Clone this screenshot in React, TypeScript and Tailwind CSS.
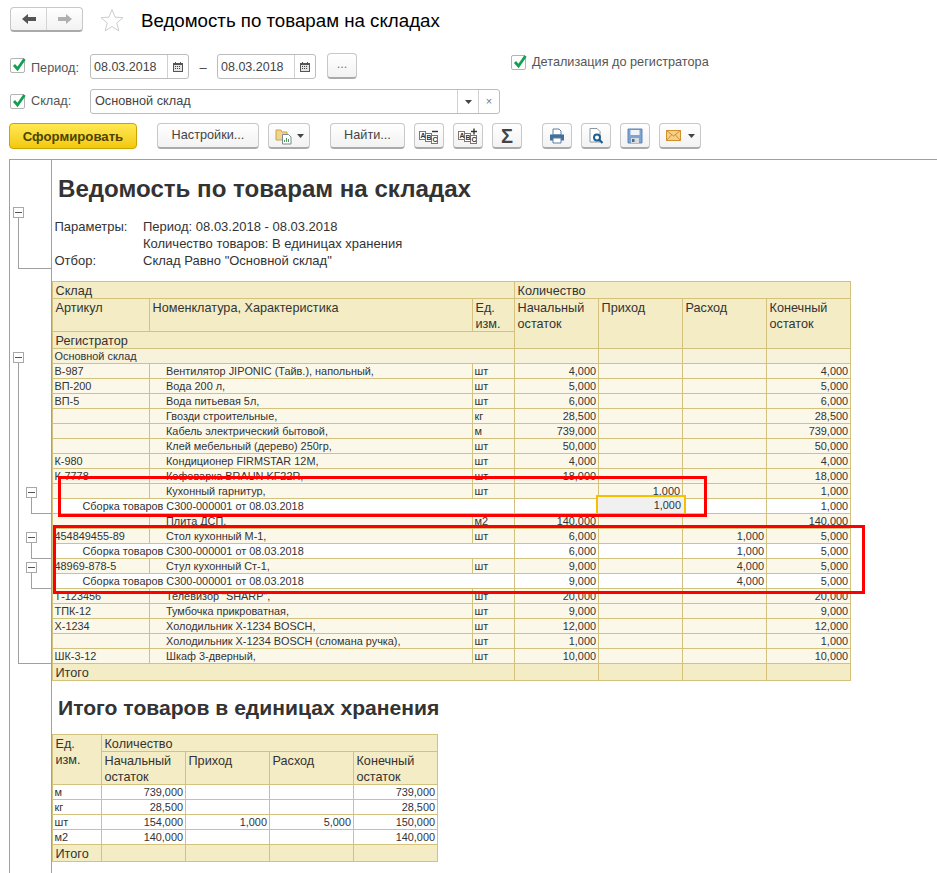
import { ReactNode } from "react";

type Row = {
  code?: string;
  name?: string;
  unit?: string;
  reg?: boolean;
  start?: string;
  inc?: string;
  out?: string;
  end?: string;
};

const REG = "Сборка товаров С300-000001 от 08.03.2018";

const rows: Row[] = [
  { code: "В-987", name: "Вентилятор JIPONIC (Тайв.), напольный,", unit: "шт", start: "4,000", end: "4,000" },
  { code: "ВП-200", name: "Вода 200 л,", unit: "шт", start: "5,000", end: "5,000" },
  { code: "ВП-5", name: "Вода питьевая 5л,", unit: "шт", start: "6,000", end: "6,000" },
  { name: "Гвозди строительные,", unit: "кг", start: "28,500", end: "28,500" },
  { name: "Кабель электрический бытовой,", unit: "м", start: "739,000", end: "739,000" },
  { name: "Клей мебельный (дерево) 250гр,", unit: "шт", start: "50,000", end: "50,000" },
  { code: "К-980", name: "Кондиционер FIRMSTAR 12М,", unit: "шт", start: "4,000", end: "4,000" },
  { code: "К-7778", name: "Кофеварка BRAUN KF22R,", unit: "шт", start: "18,000", end: "18,000" },
  { name: "Кухонный гарнитур,", unit: "шт", inc: "1,000", end: "1,000" },
  { reg: true, end: "1,000" },
  { name: "Плита ДСП,", unit: "м2", start: "140,000", end: "140,000" },
  { code: "454849455-89", name: "Стол кухонный М-1,", unit: "шт", start: "6,000", out: "1,000", end: "5,000" },
  { reg: true, start: "6,000", out: "1,000", end: "5,000" },
  { code: "48969-878-5", name: "Стул кухонный Ст-1,", unit: "шт", start: "9,000", out: "4,000", end: "5,000" },
  { reg: true, start: "9,000", out: "4,000", end: "5,000" },
  { code: "Т-123456", name: 'Телевизор "SHARP",', unit: "шт", start: "20,000", end: "20,000" },
  { code: "ТПК-12", name: "Тумбочка прикроватная,", unit: "шт", start: "9,000", end: "9,000" },
  { code: "Х-1234", name: "Холодильник Х-1234 BOSCH,", unit: "шт", start: "12,000", end: "12,000" },
  { name: "Холодильник Х-1234 BOSCH (сломана ручка),", unit: "шт", start: "1,000", end: "1,000" },
  { code: "ШК-3-12", name: "Шкаф 3-дверный,", unit: "шт", start: "10,000", end: "10,000" },
];

const totals = [
  { unit: "м", start: "739,000", end: "739,000" },
  { unit: "кг", start: "28,500", end: "28,500" },
  { unit: "шт", start: "154,000", inc: "1,000", out: "5,000", end: "150,000" },
  { unit: "м2", start: "140,000", end: "140,000" },
];

const td = "border border-[#d2c27e] px-[1.5px] align-middle text-[10.9px] leading-[13px] text-[#333] whitespace-nowrap overflow-hidden";
const num = "border border-[#d2c27e] px-[2px] align-middle text-right text-[10.9px] leading-[13px] text-[#333] whitespace-nowrap";

function Th({ children, colSpan, rowSpan }: { children?: ReactNode; colSpan?: number; rowSpan?: number }) {
  return (
    <th
      colSpan={colSpan}
      rowSpan={rowSpan}
      className="border border-[#d2c27e] bg-[#f3ecc4] px-[2.5px] align-top text-left text-[12.67px] leading-[16px] font-normal text-[#333]"
    >
      <span className="block translate-y-px">{children}</span>
    </th>
  );
}

function Check() {
  return (
    <span className="relative flex h-[15px] w-[15px] shrink-0 rounded-[2px] border border-[#b4b4b4] bg-white">
      <svg viewBox="0 0 16 16" className="absolute -top-[2px] left-0 h-[16px] w-[16px]">
        <path d="M3 8l3.5 4L13.5 2" fill="none" stroke="#12a150" strokeWidth="2.8" />
      </svg>
    </span>
  );
}

function Btn({ className, children }: { className: string; children: ReactNode }) {
  return (
    <button
      className={
        "flex h-[26px] items-center justify-center rounded-[4px] border border-b-2 border-[#c8c8c8] border-b-[#aaaaaa] bg-gradient-to-b from-white to-[#f2f2f2] text-[12.7px] text-[#444] " +
        className
      }
    >
      {children}
    </button>
  );
}

function Caret() {
  return (
    <svg viewBox="0 0 7 4" className="h-[4px] w-[7px]">
      <path d="M0 0h7L3.5 4z" fill="#444" />
    </svg>
  );
}

function CalendarIcon() {
  return (
    <svg viewBox="0 0 10 10" className="h-[10px] w-[10px]">
      <path d="M2 0h1v1h4V0h1v1h2v9H0V1h2z" fill="#555" />
      <path d="M1 3h8v6H1z" fill="#e4e4e4" />
      <path d="M2 4h1v1H2zM4 4h1v1H4zM6 4h1v1H6zM2 6h1v1H2zM4 6h1v1H4zM6 6h1v1H6z" fill="#444" />
    </svg>
  );
}

function DateInput() {
  return (
    <div className="flex h-[25px] w-[99px] items-center rounded-[3px] border border-[#bcbcbc] bg-white">
      <span className="flex-1 pl-[3px] pt-px text-[12.5px] text-[#444]">08.03.2018</span>
      <span className="flex h-full w-[21px] items-center justify-center border-l border-[#d0d0d0]">
        <CalendarIcon />
      </span>
    </div>
  );
}

function AbcIcon({ plus }: { plus?: boolean }) {
  return (
    <svg viewBox="0 0 20 18" className="h-[18px] w-[20px]">
      <rect x="0.5" y="4.5" width="6" height="8" fill="#fff" stroke="#777" />
      <rect x="6.5" y="6.5" width="6" height="8" fill="#fff" stroke="#777" />
      <rect x="12.5" y="8.5" width="6" height="8" fill="#fff" stroke="#777" />
      <text x="1.5" y="11" fontSize="7" fontWeight="700" fill="#333" fontFamily="Liberation Sans, sans-serif">A</text>
      <text x="7.5" y="13" fontSize="7" fontWeight="700" fill="#333" fontFamily="Liberation Sans, sans-serif">B</text>
      <text x="13.5" y="15" fontSize="7" fontWeight="700" fill="#333" fontFamily="Liberation Sans, sans-serif">C</text>
      <path d="M13 4.5h6" stroke="#333" strokeWidth="1.4" />
      {plus && <path d="M16 1.5v6" stroke="#333" strokeWidth="1.4" />}
    </svg>
  );
}

function Outline({ className, line, arm }: { className: string; line: string; arm: string }) {
  // скобка группировки слева от отчёта
  return (
    <div className={"absolute " + className}>
      <div className={"absolute left-[5px] w-px bg-[#a0a0a0] " + line} />
      <div className={"absolute left-[5px] h-px bg-[#a0a0a0] " + arm} />
      <div className="absolute left-0 top-0 flex h-[11px] w-[11px] items-center justify-center border border-[#a8a8a8] bg-white">
        <span className="h-px w-[7px] bg-[#555]" />
      </div>
    </div>
  );
}

export default function App() {
  return (
    <div className="flex h-[873px] flex-col overflow-hidden bg-white font-['Liberation_Sans',Arial,sans-serif]">
      <div className="flex h-[38px] items-start pl-[10px] pt-[7px]">
        <div className="flex h-[25px] w-[73px] rounded-[4px] border border-b-2 border-[#c8c8c8] border-b-[#aaaaaa] bg-gradient-to-b from-white to-[#f2f2f2]">
          <span className="flex flex-1 items-center justify-center border-r border-[#d4d4d4]">
            <svg viewBox="0 0 14 10" className="h-[10px] w-[14px]">
              <path d="M0 5l6-5v3h8v4H6v3z" fill="#555" />
            </svg>
          </span>
          <span className="flex flex-1 items-center justify-center">
            <svg viewBox="0 0 14 10" className="h-[10px] w-[14px]">
              <path d="M14 5L8 0v3H0v4h8v3z" fill="#b0b0b0" />
            </svg>
          </span>
        </div>
        <svg viewBox="0 0 24 24" className="ml-[17px] mt-[1px] h-[24px] w-[24px]">
          <path d="M12 1.5l3 7.6 8 .6-6.2 5.2 2 8L12 18.5l-6.8 4.4 2-8L1 9.7l8-.6z" fill="none" stroke="#c9ced2" strokeWidth="1" />
        </svg>
        <h1 className="ml-[17px] mt-[1px] text-[18.7px] leading-[26px] text-black">Ведомость по товарам на складах</h1>
      </div>

      <div className="mt-[15px] flex h-[26px] items-start pl-[10px]">
        <div className="mt-[5px]"><Check /></div>
        <span className="ml-[6px] mt-[6px] w-[59px] text-[12.7px] text-[#555]">Период:</span>
        <div className="mt-[1px]"><DateInput /></div>
        <span className="mt-[5px] w-[28px] text-center text-[13px] text-[#444]">–</span>
        <div className="mt-[1px]"><DateInput /></div>
        <Btn className="ml-[11px] w-[30px] pb-[2px] text-[#777]">...</Btn>
        <div className="ml-[154px] flex items-center">
          <Check />
          <span className="ml-[6px] text-[12.7px] text-[#555]">Детализация до регистратора</span>
        </div>
      </div>

      <div className="mt-[10px] flex h-[25px] items-center pl-[10px]">
        <Check />
        <span className="ml-[6px] w-[59px] pt-px text-[12.7px] text-[#555]">Склад:</span>
        <div className="flex h-[25px] w-[410px] items-center rounded-[3px] border border-[#bcbcbc] bg-white">
          <span className="flex-1 pl-[4px] pt-px text-[12.7px] text-[#444]">Основной склад</span>
          <span className="flex h-full w-[21px] items-center justify-center border-l border-[#d0d0d0]"><Caret /></span>
          <span className="flex h-full w-[21px] items-center justify-center border-l border-[#d0d0d0] text-[11px] text-[#777]">×</span>
        </div>
      </div>

      <div className="mt-[9px] flex items-start pl-[9px]">
        <button className="flex h-[26px] w-[128px] items-center justify-center rounded-[4px] border border-[#c9a500] bg-gradient-to-b from-[#ffe94f] to-[#f4c800] pt-px text-[13.2px] font-bold text-[#4d4300]">
          Сформировать
        </button>
        <Btn className="ml-[20px] w-[102px] pt-px">Настройки...</Btn>
        <Btn className="ml-[9px] w-[42px] gap-[4px]">
          <svg viewBox="0 0 18 18" className="h-[18px] w-[18px]">
            <path d="M1 3h5l1 2h5v8H1z" fill="#f2d58a" stroke="#c9a44f" />
            <path d="M7.5 7.5h6l2.5 2.5v7H7.5z" fill="#fff" stroke="#7b8894" />
            <path d="M9.5 15v-2M11.5 15v-4M13.5 15v-3" stroke="#4a9a5a" />
          </svg>
          <Caret />
        </Btn>
        <Btn className="ml-[20px] w-[75px] pt-px">Найти...</Btn>
        <Btn className="ml-[9px] w-[30px]"><AbcIcon /></Btn>
        <Btn className="ml-[9px] w-[30px]"><AbcIcon plus /></Btn>
        <Btn className="ml-[9px] w-[30px] text-[20px] font-bold text-[#2f4a5f]">Σ</Btn>
        <Btn className="ml-[20px] w-[30px]">
          <svg viewBox="0 0 16 16" className="h-[16px] w-[16px]">
            <path d="M4 1h6l2 2v4H4z" fill="#fff" stroke="#5f7f9f" />
            <path d="M1 6.5h14v6H1z" fill="#3f6f9f" />
            <path d="M4 10h8v5H4z" fill="#fff" stroke="#5f7f9f" />
          </svg>
        </Btn>
        <Btn className="ml-[9px] w-[30px]">
          <svg viewBox="0 0 16 16" className="h-[16px] w-[16px]">
            <path d="M2 .5h7l3 3V14H2z" fill="#fff" stroke="#8a97a3" />
            <circle cx="9" cy="9.5" r="3" fill="#fff" stroke="#1f5f8f" strokeWidth="2" />
            <path d="M11 11.5l3.5 3.5" stroke="#1f5f8f" strokeWidth="2.2" />
          </svg>
        </Btn>
        <Btn className="ml-[9px] w-[30px]">
          <svg viewBox="0 0 16 16" className="h-[16px] w-[16px]">
            <path d="M1 1h14v14H1z" fill="#7fa3cf" stroke="#5f85b3" />
            <path d="M3.5 2h9v5h-9z" fill="#eef3f9" />
            <path d="M4 10h8v5H4z" fill="#d8dde2" />
            <path d="M5 11h2.5v3H5z" fill="#5a6a7a" />
          </svg>
        </Btn>
        <Btn className="ml-[9px] w-[42px] gap-[7px]">
          <svg viewBox="0 0 15 11" className="h-[11px] w-[15px]">
            <path d="M.5.5h14v10H.5z" fill="#f5cf86" stroke="#d08f2f" />
            <path d="M.5.5l7 5.5 7-5.5M.5 10.5l5-5.5M14.5 10.5l-5-5.5" fill="none" stroke="#d08f2f" />
          </svg>
          <Caret />
        </Btn>
      </div>

      <div className="mt-[10px] ml-[9px] flex flex-1 border-t border-[#a0a0a0]">
        <div className="relative w-[42px] shrink-0 border-l border-[#a0a0a0]">
          <Outline className="left-[3px] top-[47px]" line="h-[62px]" arm="top-[61px] w-[33px]" />
          <Outline className="left-[3px] top-[192px]" line="h-[311px]" arm="top-[311px] w-[33px]" />
          <Outline className="left-[16px] top-[327px]" line="h-[26px]" arm="top-[26px] w-[21px]" />
          <Outline className="left-[16px] top-[372px]" line="h-[26px]" arm="top-[26px] w-[21px]" />
          <Outline className="left-[16px] top-[402px]" line="h-[26px]" arm="top-[26px] w-[21px]" />
        </div>

        <div className="relative flex-1 border-l border-[#a0a0a0]">
          <h2 className="ml-[6px] mt-[15px] text-[24.1px] leading-[28px] font-bold text-[#333]">Ведомость по товарам на складах</h2>

          <div className="mt-[15px] grid grid-cols-[88.5px_1fr] pl-[2.5px] text-[13px] leading-[17px] text-[#333]">
            <span>Параметры:</span>
            <span>Период: 08.03.2018 - 08.03.2018</span>
            <span />
            <span>Количество товаров: В единицах хранения</span>
            <span>Отбор:</span>
            <span>Склад Равно "Основной склад"</span>
          </div>

          <table className="mt-[12px] w-[798px] table-fixed border-collapse">
            <colgroup>
              <col className="w-[97px]" />
              <col className="w-[323px]" />
              <col className="w-[42px]" />
              <col className="w-[84px]" />
              <col className="w-[84px]" />
              <col className="w-[84px]" />
              <col className="w-[84px]" />
            </colgroup>
            <thead>
              <tr className="h-[16px]">
                <Th colSpan={3}>Склад</Th>
                <Th colSpan={4}>Количество</Th>
              </tr>
              <tr className="h-[33px]">
                <Th>Артикул</Th>
                <Th>Номенклатура, Характеристика</Th>
                <Th>Ед. изм.</Th>
                <Th rowSpan={2}>Начальный остаток</Th>
                <Th rowSpan={2}>Приход</Th>
                <Th rowSpan={2}>Расход</Th>
                <Th rowSpan={2}>Конечный остаток</Th>
              </tr>
              <tr className="h-[17px]">
                <Th colSpan={3}>Регистратор</Th>
              </tr>
            </thead>
            <tbody>
              <tr className="h-[15px] bg-[#f7f2dc]">
                <td colSpan={3} className={td}>Основной склад</td>
                <td className={num} />
                <td className={num} />
                <td className={num} />
                <td className={num} />
              </tr>
              {rows.map((r, i) => (
                <tr key={i} className={r.reg ? "h-[15px] bg-white" : "h-[15px] bg-[#fbf8ea]"}>
                  {r.reg ? (
                    <td colSpan={3} className={td + " pl-[29.5px]"}>{REG}</td>
                  ) : (
                    <>
                      <td className={td}>{r.code}</td>
                      <td className={td + " pl-[16px]"}>{r.name}</td>
                      <td className={td}>{r.unit}</td>
                    </>
                  )}
                  <td className={num}>{r.start}</td>
                  <td className={num}>{r.inc}</td>
                  <td className={num}>{r.out}</td>
                  <td className={num}>{r.end}</td>
                </tr>
              ))}
              <tr className="h-[17px]">
                <Th colSpan={3}>Итого</Th>
                <Th />
                <Th />
                <Th />
                <Th />
              </tr>
            </tbody>
          </table>

          <h2 className="ml-[6px] mt-[14px] text-[21.1px] leading-[26px] font-bold text-[#333]">Итого товаров в единицах хранения</h2>

          <table className="mt-[13px] w-[385px] table-fixed border-collapse">
            <colgroup>
              <col className="w-[49px]" />
              <col className="w-[84px]" />
              <col className="w-[84px]" />
              <col className="w-[84px]" />
              <col className="w-[84px]" />
            </colgroup>
            <thead>
              <tr className="h-[17px]">
                <Th rowSpan={2}>Ед. изм.</Th>
                <Th colSpan={4}>Количество</Th>
              </tr>
              <tr className="h-[33px]">
                <Th>Начальный остаток</Th>
                <Th>Приход</Th>
                <Th>Расход</Th>
                <Th>Конечный остаток</Th>
              </tr>
            </thead>
            <tbody>
              {totals.map(t => (
                <tr key={t.unit} className="h-[15px]">
                  <td className={td}>{t.unit}</td>
                  <td className={num}>{t.start}</td>
                  <td className={num}>{t.inc}</td>
                  <td className={num}>{t.out}</td>
                  <td className={num}>{t.end}</td>
                </tr>
              ))}
              <tr className="h-[17px]">
                <Th>Итого</Th>
                <Th />
                <Th />
                <Th />
                <Th />
              </tr>
            </tbody>
          </table>

          {/* рамка выбранной ячейки и красные выделения поверх таблицы */}
          <div className="absolute left-[544px] top-[335px] flex h-[20px] w-[90px] items-start justify-end border-2 border-[#f5c000] bg-[#f0f0f0] pr-[3px] pt-[2px] text-[10.9px] leading-[13px] text-[#333]">
            1,000
          </div>
          <div className="absolute left-[6px] top-[316px] h-[41px] w-[649px] border-[3px] border-[#ff0000]" />
          <div className="absolute left-px top-[365px] h-[69px] w-[812px] border-[3px] border-[#ff0000]" />
        </div>
      </div>
    </div>
  );
}
